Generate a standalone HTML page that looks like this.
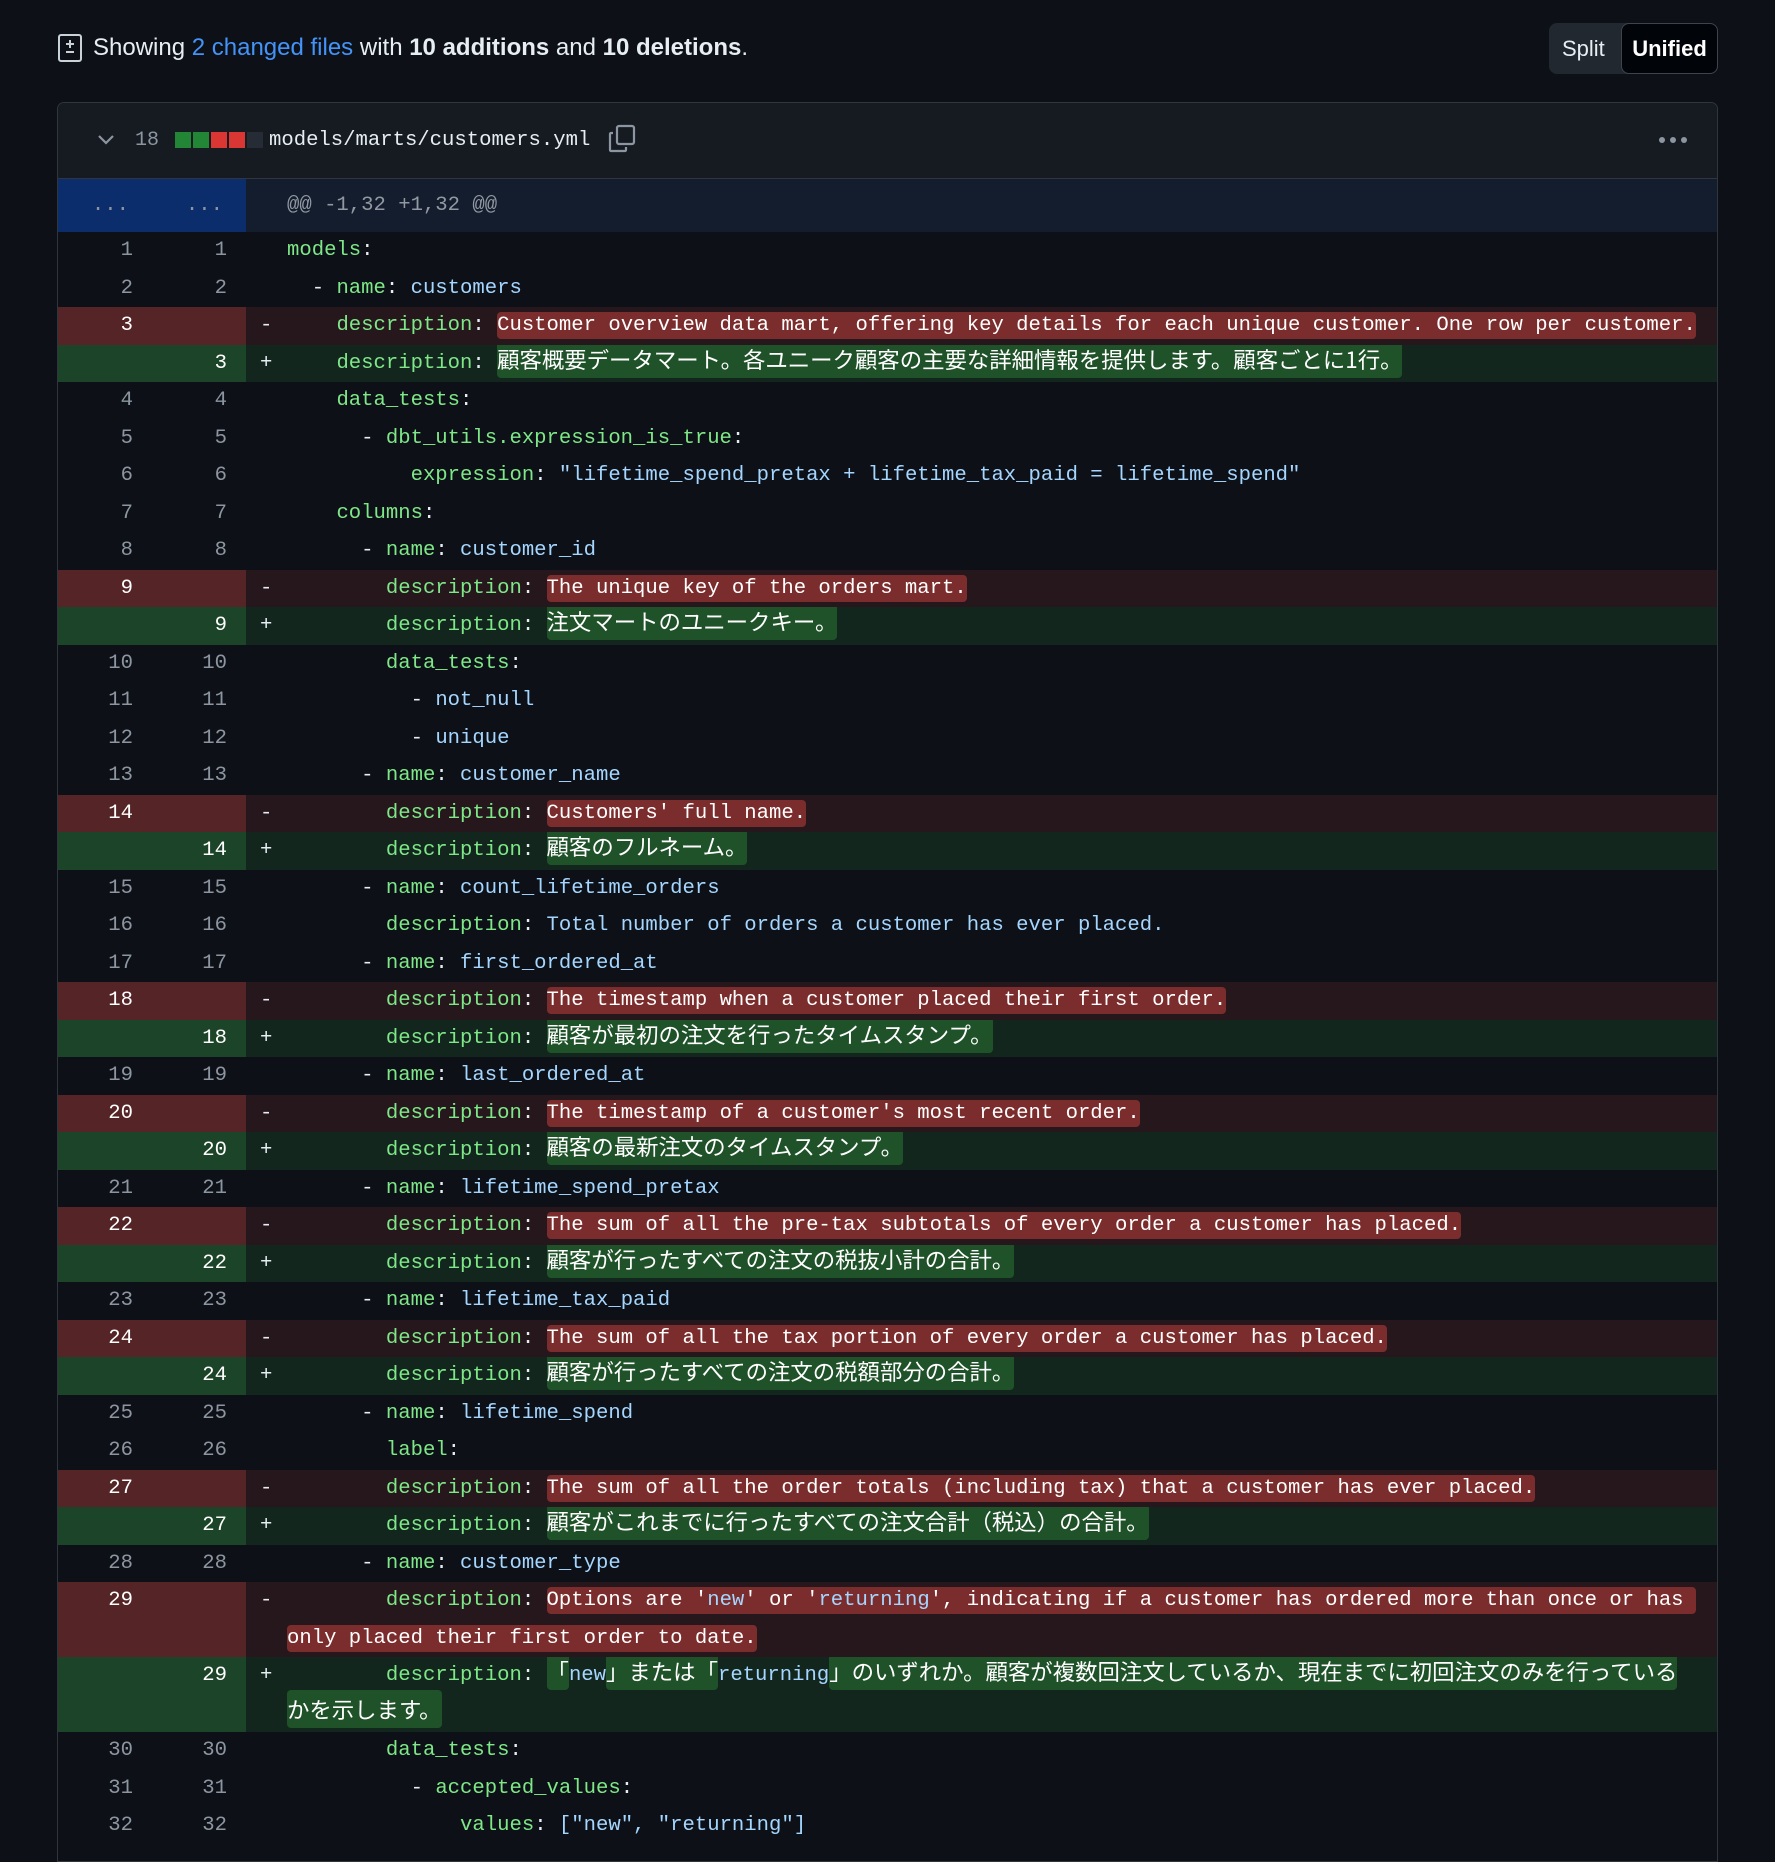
<!DOCTYPE html>
<html><head><meta charset="utf-8">
<style>
*{margin:0;padding:0;box-sizing:border-box}
body{width:1775px;height:1846px;background:#0d1117;overflow:hidden;font-family:"Liberation Sans","Noto Sans CJK JP",sans-serif;color:#e6edf3;position:relative}
.top{position:absolute;left:57px;top:28px;height:40px;display:flex;align-items:center;font-size:24px;white-space:nowrap}
.top a{color:#4493f8;text-decoration:none}
.top b{font-weight:bold}
.tog{position:absolute;left:1549px;top:23px;width:169px;height:51px;background:#212830;border-radius:8px;font-size:22px}
.tog .sp{position:absolute;left:13px;top:0;line-height:51px;color:#e6edf3}
.tog .un{position:absolute;left:72px;top:0;width:97px;height:51px;background:#010409;border:1px solid #3d444d;border-radius:8px;line-height:49px;text-align:center;font-weight:bold;color:#fff}
.box{position:absolute;left:57px;top:102px;width:1661px;height:1760px;border:1px solid #30363d;border-radius:7px 7px 0 0;overflow:hidden;background:#0d1117}
.hdr{height:76px;background:#161b22;border-bottom:1px solid #30363d;position:relative}
.mono{font-family:"Liberation Mono","Noto Sans CJK JP",monospace}
.row{position:relative;height:37.5px;display:flex;font-size:20.6px;line-height:37.5px;white-space:pre}
.row.w{height:75px}
.n{width:94px;text-align:right;padding-right:19px;color:#8d96a0;flex:none}
.n2{width:94px;text-align:right;padding-right:19px;color:#8d96a0;flex:none}
.c{flex:1;padding-left:41px;position:relative;color:#e6edf3;overflow:hidden}
.m{position:absolute;left:14px;top:0}
.del .n,.del .n2{background:#542426;color:#fff}
.del .c{background:#25171c}
.add .n,.add .n2{background:#1c4428;color:#fff}
.add .c{background:#12261e}
.k{color:#7ee787}.s{color:#a5d6ff}
.d{background:#7b2c2c;border-radius:4px;padding:2px 0;color:#fff}
.a{background:#1f5229;border-radius:4px;padding:3px 0;color:#fff}
.j{font-family:"Noto Sans CJK JP",sans-serif;font-size:22.4px;line-height:20px}
.hunk .n,.hunk .n2{background:#0c2d6b;color:#8d96a0}
.hunk .c{background:#131d2e;color:#9198a1}
</style></head><body>
<div class="top">
<svg width="26" height="30" viewBox="0 0 26 30" style="margin-right:10px"><rect x="2" y="2" width="22" height="26" rx="2" fill="none" stroke="#c9d1d9" stroke-width="2"/><path d="M13 7v8M9 11h8M9 19h8" stroke="#c9d1d9" stroke-width="2"/></svg>
<span>Showing <a>2 changed files</a> with <b>10 additions</b> and <b>10 deletions</b>.</span>
</div>
<div class="tog"><span class="sp">Split</span><span class="un">Unified</span></div>
<div class="box">
<div class="hdr">
<svg style="position:absolute;left:38px;top:30px" width="20" height="14" viewBox="0 0 20 14"><path d="M3 3l7 7 7-7" fill="none" stroke="#8d96a0" stroke-width="2.2"/></svg>
<span class="mono" style="position:absolute;left:77px;top:20px;font-size:20px;line-height:36px;color:#8d96a0">18</span>
<div style="position:absolute;left:117px;top:29px;display:flex;gap:2px"><i style="width:16px;height:16px;background:#238636"></i><i style="width:16px;height:16px;background:#238636"></i><i style="width:16px;height:16px;background:#da3633"></i><i style="width:16px;height:16px;background:#da3633"></i><i style="width:16px;height:16px;background:#262c36"></i></div>
<span class="mono" style="position:absolute;left:211px;top:20px;font-size:20.6px;line-height:36px;color:#e6edf3">models/marts/customers.yml</span>
<svg style="position:absolute;left:548px;top:20px" width="32" height="32" viewBox="0 0 32 32"><rect x="11" y="3" width="17" height="18" rx="2" fill="none" stroke="#8d96a0" stroke-width="2.2"/><path d="M7 10H5a1 1 0 0 0-1 1v16a1 1 0 0 0 1 1h14a1 1 0 0 0 1-1v-3" fill="none" stroke="#8d96a0" stroke-width="2.2"/></svg>
<svg style="position:absolute;left:1600px;top:32px" width="30" height="10"><circle cx="4" cy="5" r="3" fill="#8d96a0"/><circle cx="15" cy="5" r="3" fill="#8d96a0"/><circle cx="26" cy="5" r="3" fill="#8d96a0"/></svg>
</div>
<div class="mono">
<div class="row hunk" style="height:53px;line-height:53px"><div class="n" style="padding-right:23px">...</div><div class="n2" style="padding-right:23px">...</div><div class="c">@@ -1,32 +1,32 @@</div></div>
<div class="row"><div class="n">1</div><div class="n2">1</div><div class="c"><span class="k">models</span>:</div></div>
<div class="row"><div class="n">2</div><div class="n2">2</div><div class="c">  - <span class="k">name</span>: <span class="s">customers</span></div></div>
<div class="row del"><div class="n">3</div><div class="n2"></div><div class="c"><span class="m">-</span>    <span class="k">description</span>: <span class="d">Customer overview data mart, offering key details for each unique customer. One row per customer.</span></div></div>
<div class="row add"><div class="n"></div><div class="n2">3</div><div class="c"><span class="m">+</span>    <span class="k">description</span>: <span class="a j">顧客概要データマート。各ユニーク顧客の主要な詳細情報を提供します。顧客ごとに1行。</span></div></div>
<div class="row"><div class="n">4</div><div class="n2">4</div><div class="c">    <span class="k">data_tests</span>:</div></div>
<div class="row"><div class="n">5</div><div class="n2">5</div><div class="c">      - <span class="k">dbt_utils.expression_is_true</span>:</div></div>
<div class="row"><div class="n">6</div><div class="n2">6</div><div class="c">          <span class="k">expression</span>: <span class="s">"lifetime_spend_pretax + lifetime_tax_paid = lifetime_spend"</span></div></div>
<div class="row"><div class="n">7</div><div class="n2">7</div><div class="c">    <span class="k">columns</span>:</div></div>
<div class="row"><div class="n">8</div><div class="n2">8</div><div class="c">      - <span class="k">name</span>: <span class="s">customer_id</span></div></div>
<div class="row del"><div class="n">9</div><div class="n2"></div><div class="c"><span class="m">-</span>        <span class="k">description</span>: <span class="d">The unique key of the orders mart.</span></div></div>
<div class="row add"><div class="n"></div><div class="n2">9</div><div class="c"><span class="m">+</span>        <span class="k">description</span>: <span class="a j">注文マートのユニークキー。</span></div></div>
<div class="row"><div class="n">10</div><div class="n2">10</div><div class="c">        <span class="k">data_tests</span>:</div></div>
<div class="row"><div class="n">11</div><div class="n2">11</div><div class="c">          - <span class="s">not_null</span></div></div>
<div class="row"><div class="n">12</div><div class="n2">12</div><div class="c">          - <span class="s">unique</span></div></div>
<div class="row"><div class="n">13</div><div class="n2">13</div><div class="c">      - <span class="k">name</span>: <span class="s">customer_name</span></div></div>
<div class="row del"><div class="n">14</div><div class="n2"></div><div class="c"><span class="m">-</span>        <span class="k">description</span>: <span class="d">Customers' full name.</span></div></div>
<div class="row add"><div class="n"></div><div class="n2">14</div><div class="c"><span class="m">+</span>        <span class="k">description</span>: <span class="a j">顧客のフルネーム。</span></div></div>
<div class="row"><div class="n">15</div><div class="n2">15</div><div class="c">      - <span class="k">name</span>: <span class="s">count_lifetime_orders</span></div></div>
<div class="row"><div class="n">16</div><div class="n2">16</div><div class="c">        <span class="k">description</span>: <span class="s">Total number of orders a customer has ever placed.</span></div></div>
<div class="row"><div class="n">17</div><div class="n2">17</div><div class="c">      - <span class="k">name</span>: <span class="s">first_ordered_at</span></div></div>
<div class="row del"><div class="n">18</div><div class="n2"></div><div class="c"><span class="m">-</span>        <span class="k">description</span>: <span class="d">The timestamp when a customer placed their first order.</span></div></div>
<div class="row add"><div class="n"></div><div class="n2">18</div><div class="c"><span class="m">+</span>        <span class="k">description</span>: <span class="a j">顧客が最初の注文を行ったタイムスタンプ。</span></div></div>
<div class="row"><div class="n">19</div><div class="n2">19</div><div class="c">      - <span class="k">name</span>: <span class="s">last_ordered_at</span></div></div>
<div class="row del"><div class="n">20</div><div class="n2"></div><div class="c"><span class="m">-</span>        <span class="k">description</span>: <span class="d">The timestamp of a customer's most recent order.</span></div></div>
<div class="row add"><div class="n"></div><div class="n2">20</div><div class="c"><span class="m">+</span>        <span class="k">description</span>: <span class="a j">顧客の最新注文のタイムスタンプ。</span></div></div>
<div class="row"><div class="n">21</div><div class="n2">21</div><div class="c">      - <span class="k">name</span>: <span class="s">lifetime_spend_pretax</span></div></div>
<div class="row del"><div class="n">22</div><div class="n2"></div><div class="c"><span class="m">-</span>        <span class="k">description</span>: <span class="d">The sum of all the pre-tax subtotals of every order a customer has placed.</span></div></div>
<div class="row add"><div class="n"></div><div class="n2">22</div><div class="c"><span class="m">+</span>        <span class="k">description</span>: <span class="a j">顧客が行ったすべての注文の税抜小計の合計。</span></div></div>
<div class="row"><div class="n">23</div><div class="n2">23</div><div class="c">      - <span class="k">name</span>: <span class="s">lifetime_tax_paid</span></div></div>
<div class="row del"><div class="n">24</div><div class="n2"></div><div class="c"><span class="m">-</span>        <span class="k">description</span>: <span class="d">The sum of all the tax portion of every order a customer has placed.</span></div></div>
<div class="row add"><div class="n"></div><div class="n2">24</div><div class="c"><span class="m">+</span>        <span class="k">description</span>: <span class="a j">顧客が行ったすべての注文の税額部分の合計。</span></div></div>
<div class="row"><div class="n">25</div><div class="n2">25</div><div class="c">      - <span class="k">name</span>: <span class="s">lifetime_spend</span></div></div>
<div class="row"><div class="n">26</div><div class="n2">26</div><div class="c">        <span class="k">label</span>:</div></div>
<div class="row del"><div class="n">27</div><div class="n2"></div><div class="c"><span class="m">-</span>        <span class="k">description</span>: <span class="d">The sum of all the order totals (including tax) that a customer has ever placed.</span></div></div>
<div class="row add"><div class="n"></div><div class="n2">27</div><div class="c"><span class="m">+</span>        <span class="k">description</span>: <span class="a j">顧客がこれまでに行ったすべての注文合計（税込）の合計。</span></div></div>
<div class="row"><div class="n">28</div><div class="n2">28</div><div class="c">      - <span class="k">name</span>: <span class="s">customer_type</span></div></div>
<div class="row del w"><div class="n" style="line-height:37.5px">29</div><div class="n2"></div><div class="c"><span class="m">-</span>        <span class="k">description</span>: <span class="d">Options are '<span class="s">new</span>' or '<span class="s">returning</span>', indicating if a customer has ordered more than once or has </span><br><span class="d">only placed their first order to date.</span></div></div>
<div class="row add w"><div class="n"></div><div class="n2" style="line-height:37.5px">29</div><div class="c"><span class="m">+</span>        <span class="k">description</span>: <span class="a j">「</span><span class="s">new</span><span class="a j">」または「</span><span class="s">returning</span><span class="a j">」のいずれか。顧客が複数回注文しているか、現在までに初回注文のみを行っている</span><br><span class="a j">かを示します。</span></div></div>
<div class="row"><div class="n">30</div><div class="n2">30</div><div class="c">        <span class="k">data_tests</span>:</div></div>
<div class="row"><div class="n">31</div><div class="n2">31</div><div class="c">          - <span class="k">accepted_values</span>:</div></div>
<div class="row"><div class="n">32</div><div class="n2">32</div><div class="c">              <span class="k">values</span>: <span class="s">["new", "returning"]</span></div></div>
</div>
</div>
</body></html>
